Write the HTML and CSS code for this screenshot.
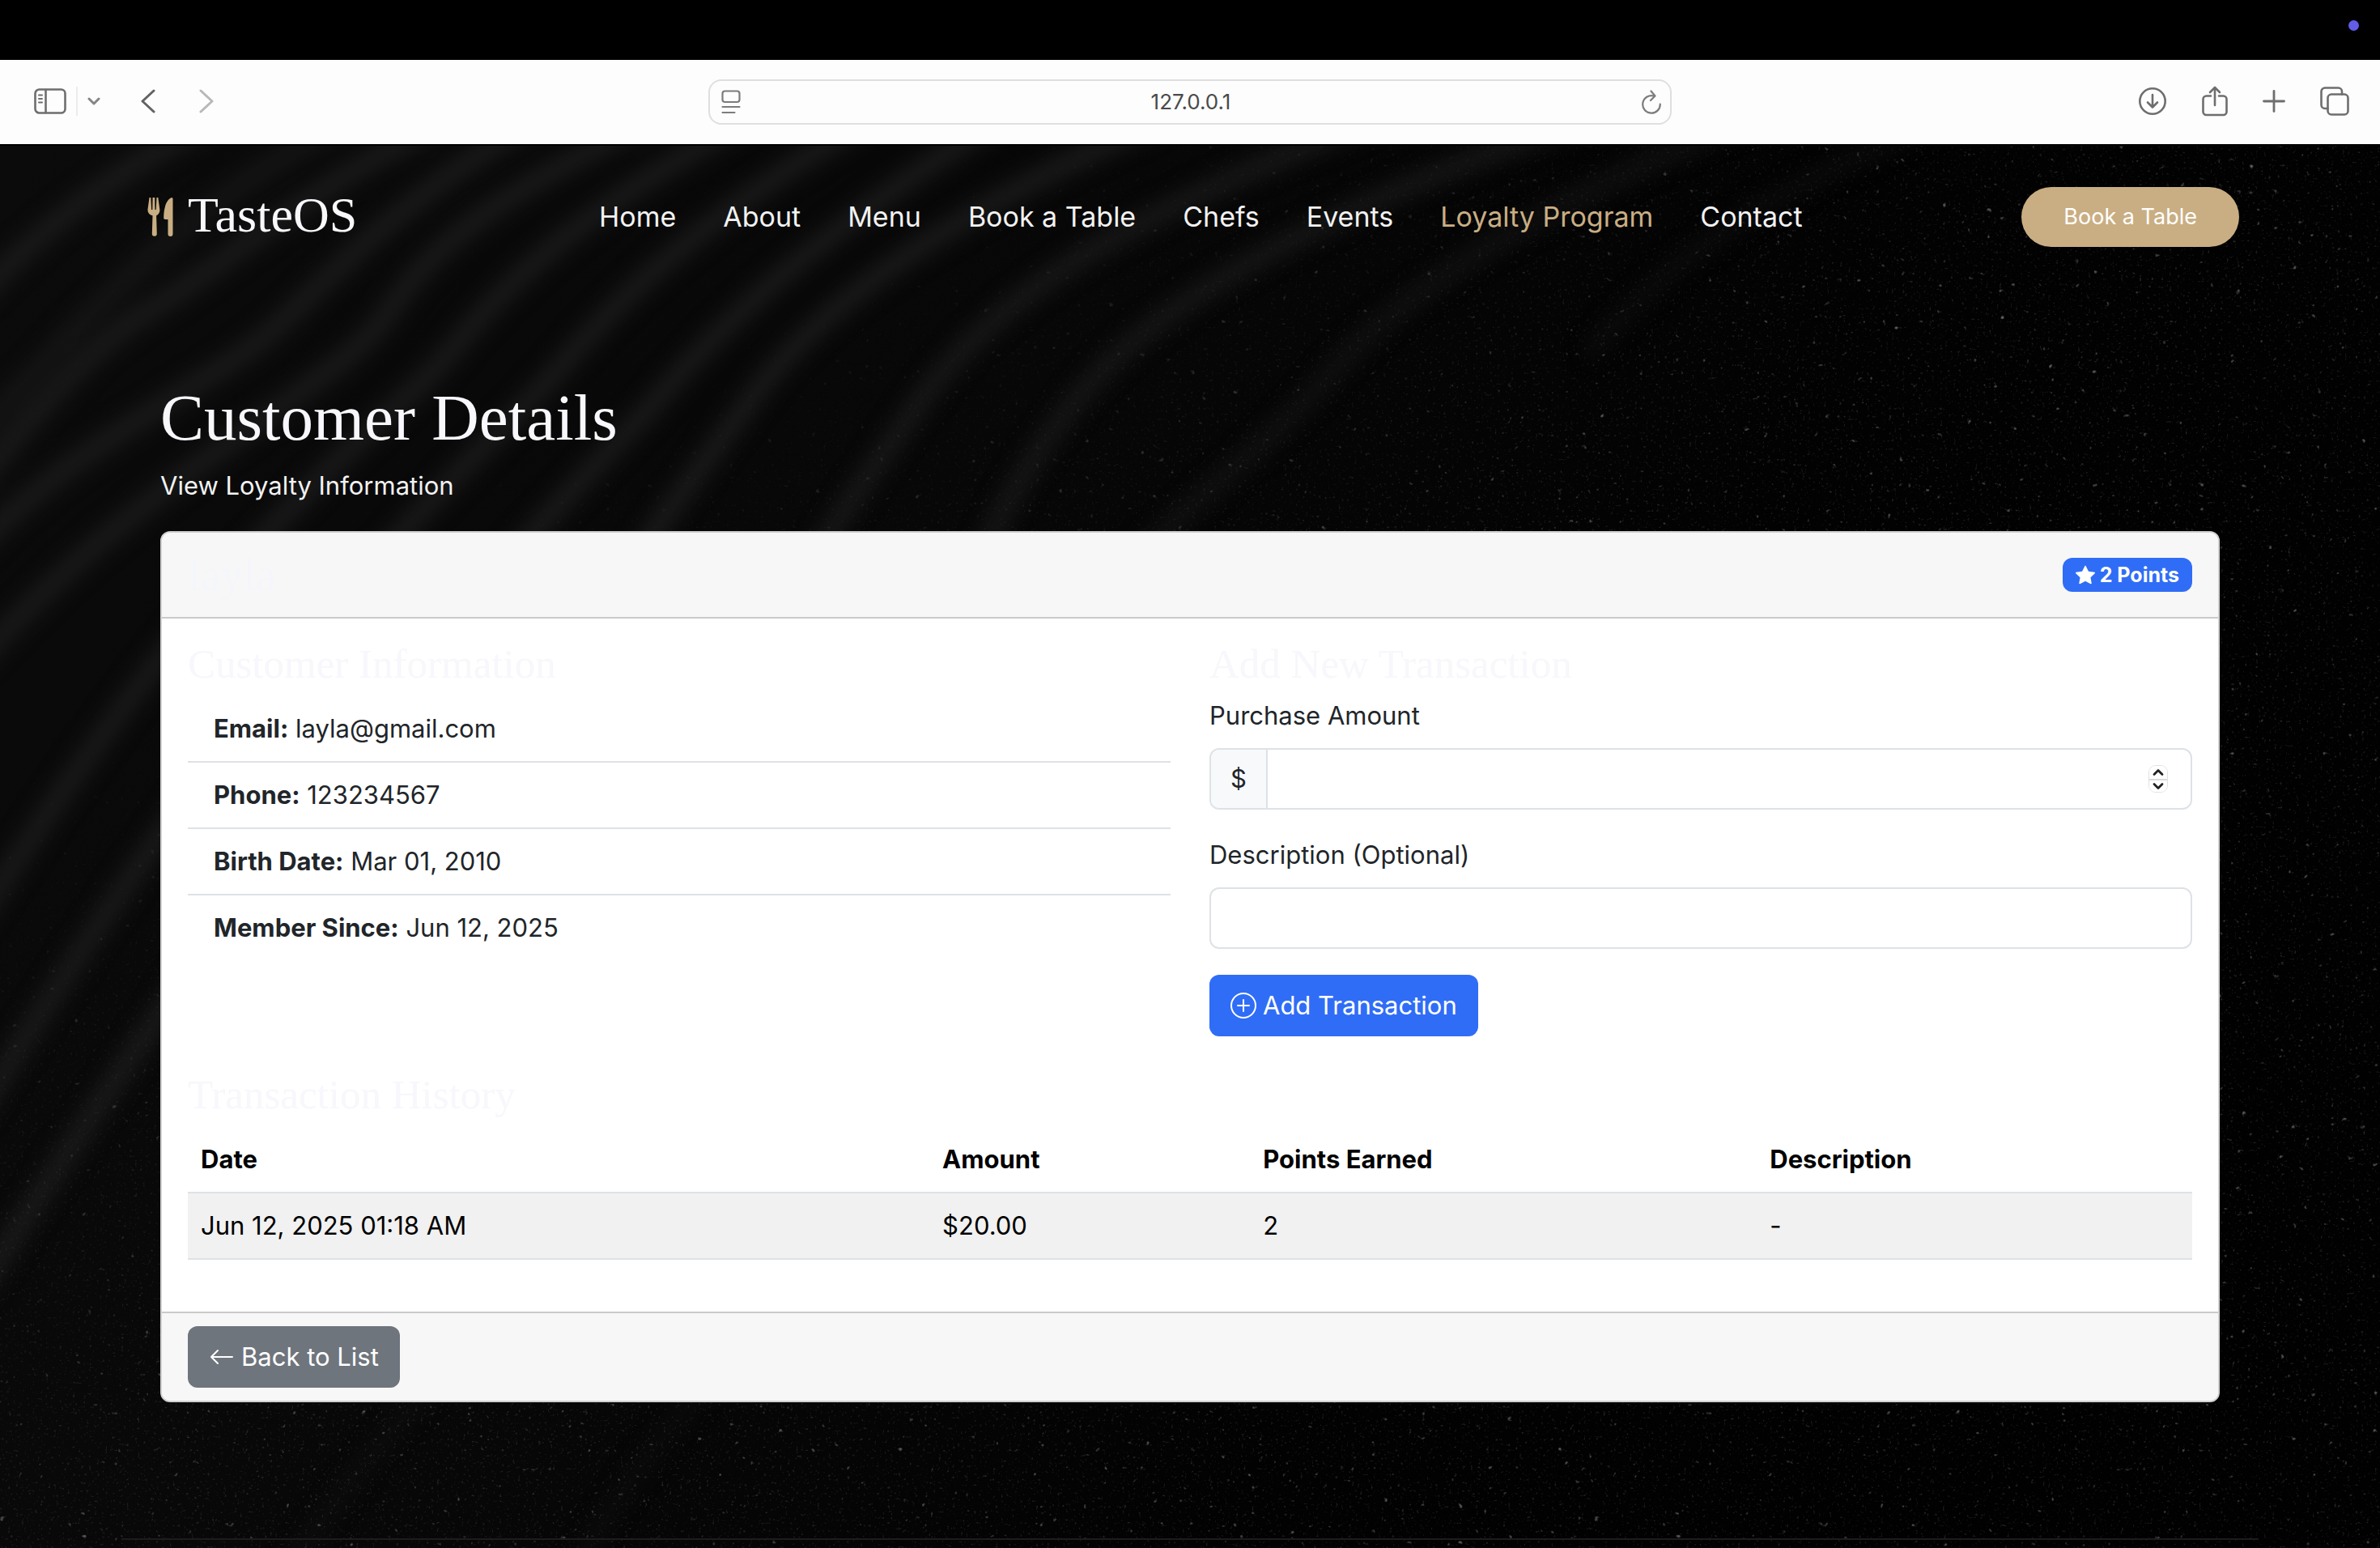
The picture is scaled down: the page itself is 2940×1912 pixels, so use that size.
FILE: index.html
```html
<!DOCTYPE html>
<html lang="en">
<head>
<meta charset="utf-8">
<meta name="viewport" content="width=device-width, initial-scale=1">
<title>TasteOS - Customer Details</title>
<link rel="stylesheet" href="styles.css">
</head>
<body>
<div class="menu-strip"><span class="status-dot"></span></div>

<div class="toolbar">
  <div class="toolbar-side">
    <button class="tool tool-sidebar" aria-label="Show sidebar"><svg width="40" height="32" viewBox="0 0 40 32" fill="none" stroke="#6e6e6e" stroke-width="2.6" stroke-linecap="round"><rect x="1.5" y="1.5" width="37" height="29" rx="5"/><path d="M14.5 2v28"/><path d="M6 8.500h4M6 13h4M6 17.500h4" stroke-width="2"/></svg></button>
    <span class="tool-divider"></span>
    <button class="tool tool-caret" aria-label="Tab groups"><svg width="16" height="10" viewBox="0 0 16 10" fill="none" stroke="#858585" stroke-width="3" stroke-linecap="round" stroke-linejoin="round"><path d="M2 2l6 6 6-6"/></svg></button>
    <button class="tool tool-back" aria-label="Back"><svg width="18" height="30" viewBox="0 0 18 30" fill="none" stroke="#626262" stroke-width="3" stroke-linecap="round" stroke-linejoin="round"><path d="M16 2L2 15l14 13"/></svg></button>
    <button class="tool" aria-label="Forward"><svg width="18" height="30" viewBox="0 0 18 30" fill="none" stroke="#b8b8b8" stroke-width="3" stroke-linecap="round" stroke-linejoin="round"><path d="M2 2l14 13L2 28"/></svg></button>
  </div>
  <div class="address">
    <button class="tool" aria-label="Page menu"><svg width="24" height="30" viewBox="0 0 24 30" fill="none" stroke="#7c7c7c" stroke-width="2.200" stroke-linecap="round"><rect x="1.500" y="1.500" width="21" height="13.500" rx="3"/><path d="M1.500 21h21M1.500 28h15"/></svg></button>
    <span class="address-text">127.0.0.1</span>
    <button class="tool" aria-label="Reload"><svg width="26" height="30" viewBox="0 0 26 30" fill="none" stroke="#7c7c7c" stroke-width="2.200" stroke-linecap="round" stroke-linejoin="round"><path d="M16 7.500A10.800 10.800 0 1 0 23.800 17.500"/><path d="M12.500 1.500l5 6-5.500 5.500"/></svg></button>
  </div>
  <div class="toolbar-side toolbar-end">
    <button class="tool" aria-label="Downloads"><svg width="36" height="36" viewBox="0 0 36 36" fill="none" stroke="#6e6e6e" stroke-width="2.600" stroke-linecap="round" stroke-linejoin="round"><circle cx="18" cy="18" r="15.700"/><path d="M18 10v15M12 19.500l6 6 6-6"/></svg></button>
    <button class="tool" aria-label="Share"><svg width="32" height="38" viewBox="0 0 32 38" fill="none" stroke="#6e6e6e" stroke-width="2.600" stroke-linecap="round" stroke-linejoin="round"><path d="M11 12.500H5.500a4 4 0 0 0-4 4V32a4 4 0 0 0 4 4h21a4 4 0 0 0 4-4V16.500a4 4 0 0 0-4-4H21"/><path d="M16 24V2M10 8l6-6 6 6"/></svg></button>
    <button class="tool" aria-label="New tab"><svg width="28" height="28" viewBox="0 0 28 28" fill="none" stroke="#6e6e6e" stroke-width="2.800" stroke-linecap="round"><path d="M14 1.500v25M1.500 14h25"/></svg></button>
    <button class="tool" aria-label="Tab overview"><svg width="36" height="36" viewBox="0 0 36 36" fill="none" stroke="#6e6e6e" stroke-width="2.600" stroke-linecap="round" stroke-linejoin="round"><rect x="9.500" y="9.500" width="25" height="25" rx="4.500"/><path d="M9.500 27H6a4.500 4.500 0 0 1-4.500-4.500V6A4.500 4.500 0 0 1 6 1.500h16.500A4.500 4.500 0 0 1 27 6v3.500"/></svg></button>
  </div>
</div>

<div class="site">
  <svg class="backdrop" viewBox="0 0 2940 1732" preserveAspectRatio="xMidYMin slice" aria-hidden="true">
    <defs>
      <linearGradient id="base" x1="0" y1="0" x2="1" y2="0.300">
        <stop offset="0" stop-color="#0b0b0b"/><stop offset="0.450" stop-color="#070707"/><stop offset="0.750" stop-color="#020202"/><stop offset="1" stop-color="#010101"/>
      </linearGradient>
      <linearGradient id="fade" x1="0" y1="0" x2="1" y2="0.900">
        <stop offset="0.220" stop-color="#000"/><stop offset="0.500" stop-color="#fff"/>
      </linearGradient>
      <mask id="dust"><rect width="2940" height="1732" fill="url(#fade)"/></mask>
      <filter id="soft" filterUnits="userSpaceOnUse" x="-60" y="-60" width="3060" height="1860" color-interpolation-filters="sRGB"><feGaussianBlur stdDeviation="13"/></filter>
      <filter id="fine" x="0" y="0" width="100%" height="100%" color-interpolation-filters="sRGB">
        <feTurbulence type="fractalNoise" baseFrequency="0.300" numOctaves="2" seed="4"/>
        <feColorMatrix values="0 0 0 0 0.350  0 0 0 0 0.350  0 0 0 0 0.350  1.800 0 0 0 -1.150"/>
      </filter>
      <filter id="coarse" x="0" y="0" width="100%" height="100%" color-interpolation-filters="sRGB">
        <feTurbulence type="fractalNoise" baseFrequency="0.130" numOctaves="2" seed="11"/>
        <feColorMatrix values="0 0 0 0 0.400  0 0 0 0 0.400  0 0 0 0 0.400  5 0 0 0 -3.700"/>
      </filter>
    </defs>
    <rect width="2940" height="1732" fill="url(#base)"/>
    <g filter="url(#soft)" fill="none" stroke="#1d1d1d" stroke-width="22">
      <path d="M260-30C150 30 60 90-30 190"/>
      <path d="M430-30C250 60 130 180-30 360" stroke-opacity="0.700"/>
      <path d="M550-30C380 50 260 160 190 200S40 330-30 420"/>
      <path d="M660-30C500 60 410 160 340 225S70 380-30 500"/>
      <path d="M800-30C640 50 540 110 480 205S180 400-30 640"/>
      <path d="M920-30C740 70 640 150 560 250S300 440-30 960"/>
      <path d="M1070-30C880 80 770 180 689 277S360 560-30 1200"/>
      <path d="M1230-30C1010 110 900 210 810 315S460 640-30 1420"/>
      <path d="M1430-30C1160 90 1010 200 930 310S780 500 700 660"/>
      <path d="M1690-30C1390 90 1230 180 1130 325S1000 500 950 640" stroke-opacity="0.850"/>
      <path d="M1950-30C1630 80 1440 190 1350 290S1210 500 1160 640" stroke-opacity="0.800"/>
      <path d="M2150-30C1850 100 1720 190 1631 295S1400 480 1280 660" stroke-opacity="0.500"/>
      <path d="M2400-30C2170 60 2060 140 1960 260" stroke-opacity="0.300"/>
      <path d="M620 1440C500 1560 420 1660 340 1780" stroke-opacity="0.200"/>
      <path d="M960 1440C840 1560 760 1660 700 1780" stroke-opacity="0.200"/>
    </g>
    <g mask="url(#dust)">
      <rect width="2940" height="1732" filter="url(#fine)"/>
      <rect width="2940" height="1732" filter="url(#coarse)"/>
    </g>
  </svg>

  <header class="site-header">
    <a class="brand" href="#">
      <svg width="32" height="48" viewBox="0 0 32 48" fill="#c9ae83" aria-hidden="true"><path d="M2.500 0h1.800l.8 15h1.200L6.600 0h2.600l.3 15h1.200L11.500 0h1.800l2 14.500c.4 3.500-1.200 6.500-4.200 7.800l.7 22.500a3 3 0 0 1-6 0l.7-22.500C2 21 .2 18 .5 14.500z"/><path d="M31.500 2v43a3 3 0 0 1-6 0V27h-3.300a2 2 0 0 1-2-2.200C20.300 14 23 3 29.500.200a1.500 1.500 0 0 1 2 1.800z"/></svg>
      <span class="brand-name">TasteOS</span>
    </a>
    <nav class="site-nav">
      <a href="#">Home</a>
      <a href="#">About</a>
      <a href="#">Menu</a>
      <a href="#">Book a Table</a>
      <a href="#">Chefs</a>
      <a href="#">Events</a>
      <a href="#" class="active">Loyalty Program</a>
      <a href="#">Contact</a>
    </nav>
    <a class="book-button" href="#">Book a Table</a>
  </header>

  <main class="content">
    <h1>Customer Details</h1>
    <p class="lead">View Loyalty Information</p>

    <section class="card">
      <div class="card-header">
        <h2 class="customer-name">layla</h2>
        <span class="badge"><svg width="24" height="24" viewBox="0 0 16 16" fill="#fff" aria-hidden="true"><path d="M3.612 15.443c-.386.198-.824-.149-.746-.592l.830-4.730L.173 6.765c-.329-.314-.158-.888.283-.950l4.898-.696L7.538.792c.197-.390.730-.390.927 0l2.184 4.327 4.898.696c.441.062.612.636.282.950l-3.522 3.356.830 4.730c.078.443-.360.790-.746.592L8 13.187l-4.389 2.256z"/></svg>2 Points</span>
      </div>

      <div class="card-body">
        <div class="columns">
          <div>
            <h3>Customer Information</h3>
            <ul class="facts">
              <li><strong>Email:</strong> layla@gmail.com</li>
              <li><strong>Phone:</strong> 123234567</li>
              <li><strong>Birth Date:</strong> Mar 01, 2010</li>
              <li><strong>Member Since:</strong> Jun 12, 2025</li>
            </ul>
          </div>
          <form class="form">
            <h3>Add New Transaction</h3>
            <label for="amount">Purchase Amount</label>
            <div class="input-group">
              <span class="prefix">$</span>
              <input id="amount" class="amount" type="number">
              <span class="stepper">
                <button type="button" aria-label="Increase"><svg width="14" height="10" viewBox="0 0 14 10" fill="none" stroke="#222" stroke-width="2.800" stroke-linecap="round" stroke-linejoin="round"><path d="M2 7.500l5-5 5 5"/></svg></button>
                <button type="button" aria-label="Decrease"><svg width="14" height="10" viewBox="0 0 14 10" fill="none" stroke="#222" stroke-width="2.800" stroke-linecap="round" stroke-linejoin="round"><path d="M2 2.500l5 5 5-5"/></svg></button>
              </span>
            </div>
            <label for="description">Description (Optional)</label>
            <input id="description" class="text-input" type="text">
            <button class="btn btn-primary" type="submit"><svg width="32" height="32" viewBox="0 0 16 16" fill="#fff" aria-hidden="true"><path d="M8 15A7 7 0 1 1 8 1a7 7 0 0 1 0 14m0 1A8 8 0 1 0 8 0a8 8 0 0 0 0 16"/><path d="M8 4a.5.5 0 0 1 .5.5v3h3a.5.5 0 0 1 0 1h-3v3a.5.5 0 0 1-1 0v-3h-3a.5.5 0 0 1 0-1h3v-3A.5.5 0 0 1 8 4"/></svg>Add Transaction</button>
          </form>
        </div>

        <h3>Transaction History</h3>
        <table class="history">
          <thead>
            <tr><th scope="col" class="col-date">Date</th><th scope="col" class="col-amount">Amount</th><th scope="col">Points Earned</th><th scope="col">Description</th></tr>
          </thead>
          <tbody>
            <tr><td>Jun 12, 2025 01:18 AM</td><td>$20.00</td><td>2</td><td>-</td></tr>
          </tbody>
        </table>
      </div>

      <div class="card-footer">
        <a class="btn btn-secondary" href="#"><svg width="32" height="32" viewBox="0 0 16 16" fill="#fff" aria-hidden="true"><path fill-rule="evenodd" d="M15 8a.5.5 0 0 0-.5-.5H2.707l3.147-3.146a.5.5 0 1 0-.708-.708l-4 4a.5.5 0 0 0 0 .708l4 4a.5.5 0 0 0 .708-.708L2.707 8.500H14.500A.5.5 0 0 0 15 8"/></svg>Back to List</a>
      </div>
    </section>
  </main>

  <footer class="site-footer"></footer>
</div>
</body>
</html>
```
FILE: styles.css
```css
* {
  box-sizing: border-box;
}

body {
  margin: 0;
  min-height: 100vh;
  display: flex;
  flex-direction: column;
  background: #000;
  color: #212529;
  font-family: Inter, "Noto Sans", sans-serif;
  font-size: 31px;
  line-height: 48px;
}

h1, h2, h3 {
  margin: 0;
  color: #f7f7fc;
  font-family: "Liberation Serif", serif;
  font-weight: 400;
}

a {
  text-decoration: none;
}

button,
input {
  font: inherit;
}

svg {
  display: block;
  flex: none;
}

/* Browser chrome */

.menu-strip {
  height: 74px;
  display: flex;
  justify-content: flex-end;
  padding: 25px 26px;
}

.status-dot {
  width: 13px;
  height: 13px;
  border-radius: 50%;
  background: #625ce8;
}

.toolbar {
  height: 106px;
  display: grid;
  grid-template-columns: 1fr minmax(0, 1190px) 1fr;
  align-items: center;
  background: #fdfdfd;
  border-bottom: 2px solid #000;
}

.toolbar-side {
  display: flex;
  align-items: center;
  padding: 0 38px 2px 42px;
}

.toolbar-end {
  justify-content: flex-end;
  gap: 43px;
}

.tool {
  display: flex;
  padding: 0;
  border: 0;
  background: none;
}

.tool-divider {
  width: 2px;
  height: 36px;
  margin: 0 12px;
  background: #ececec;
}

.tool-caret {
  margin-right: 50px;
}

.tool-back {
  margin-right: 54px;
}

.address {
  height: 56px;
  display: flex;
  align-items: center;
  justify-content: space-between;
  padding: 0 10px 0 14px;
  border: 2px solid #dfdfdf;
  border-radius: 16px;
}

.address-text {
  color: #4a4a4a;
  font-size: 26px;
}

/* Site */

.site {
  position: relative;
  flex: 1;
  display: flex;
  flex-direction: column;
  isolation: isolate;
}

.backdrop {
  position: absolute;
  inset: 0;
  z-index: -1;
  width: 100%;
  height: 100%;
}

.site-header {
  width: 100%;
  max-width: 2640px;
  height: 176px;
  margin: 0 auto;
  padding: 0 24px 0 32px;
  display: flex;
  align-items: center;
  justify-content: space-between;
}

.brand {
  display: flex;
  align-items: center;
  gap: 18px;
  margin-right: 28px;
}

.brand-name {
  padding-bottom: 6px;
  color: #f7f7fc;
  font-family: "Liberation Serif", serif;
  font-size: 62px;
}

.site-nav {
  display: flex;
  gap: 58px;
  font-size: 34px;
}

.site-nav a {
  color: #f2f2f2;
}

.site-nav .active {
  color: #c9ae83;
}

.book-button {
  padding: 13px 52px;
  border-radius: 50px;
  background: #c9ae83;
  color: #fff;
  font-size: 27px;
}

.content {
  width: 100%;
  max-width: 2640px;
  margin: 0 auto;
  padding: 112px 48px 168px;
}

h1 {
  margin-bottom: 12px;
  font-size: 81px;
  line-height: 96px;
}

.lead {
  margin: 0 0 32px;
  color: #f2f2f2;
}

.card {
  border: 2px solid #d0d0d0;
  border-radius: 12px;
  background: #fff;
  overflow: hidden;
}

.card-header {
  display: flex;
  align-items: center;
  justify-content: space-between;
  padding: 20px 32px;
  border-bottom: 2px solid #cacaca;
  background: #f7f7f7;
}

.customer-name {
  color: #f5f6fb;
  font-size: 56px;
  line-height: 64px;
}

.badge {
  display: flex;
  align-items: center;
  gap: 6px;
  padding: 0 16px;
  border-radius: 12px;
  background: #306df6;
  color: #fff;
  font-size: 25px;
  font-weight: 700;
  line-height: 42px;
}

.card-body {
  padding: 32px 32px 64px;
}

.columns {
  display: grid;
  grid-template-columns: 1fr 1fr;
  gap: 48px;
  margin-bottom: 48px;
}

h3 {
  margin-bottom: 16px;
  font-size: 51px;
  line-height: 48px;
}

.facts {
  margin: 0;
  padding: 0;
  list-style: none;
}

.facts li {
  padding: 16px 32px;
  border-bottom: 2px solid #dee2e6;
}

.facts li:last-child {
  border-bottom: 0;
}

.form {
  display: flex;
  flex-direction: column;
  align-items: flex-start;
}

.form label {
  margin-bottom: 16px;
}

.input-group,
.text-input {
  width: 100%;
  height: 76px;
  margin-bottom: 32px;
  border: 2px solid #dee2e6;
  border-radius: 12px;
  background: #fff;
}

.input-group {
  display: flex;
  align-items: center;
  overflow: hidden;
}

.text-input {
  padding: 0 24px;
}

.prefix {
  padding: 12px 24px;
  border-right: 2px solid #dee2e6;
  background: #f8f9fb;
}

.amount {
  flex: 1;
  min-width: 0;
  height: 100%;
  padding: 0 24px;
  border: 0;
  background: transparent;
  appearance: textfield;
}

.amount::-webkit-inner-spin-button {
  display: none;
}

.stepper {
  width: 24px;
  margin-right: 28px;
  border: 1px solid #e2e2e2;
  border-radius: 9px;
  overflow: hidden;
}

.stepper button {
  width: 100%;
  height: 16px;
  display: flex;
  align-items: center;
  justify-content: center;
  padding: 0;
  border: 0;
  background: #fff;
}

.stepper button + button {
  border-top: 2px solid #dcdcdc;
}

.btn {
  height: 76px;
  display: inline-flex;
  align-items: center;
  gap: 8px;
  padding: 0 26px;
  border: 0;
  border-radius: 12px;
  color: #fff;
}

.btn-primary {
  background: #306df6;
}

.btn-secondary {
  background: #6f757d;
}

.history {
  width: 100%;
  border-collapse: separate;
  border-spacing: 0;
  color: #000;
}

.history th,
.history td {
  padding: 16px;
  border-bottom: 2px solid #dee2e6;
  text-align: left;
}

.history td {
  background: #f1f1f1;
}

.col-date {
  width: 37%;
}

.col-amount {
  width: 16%;
}

.card-footer {
  display: flex;
  padding: 16px 32px;
  border-top: 2px solid #cacaca;
  background: #f7f7f7;
}

.site-footer {
  width: 100%;
  max-width: 2640px;
  height: 12px;
  margin: 0 auto;
  border-top: 2px solid #1c1c1c;
}
```
